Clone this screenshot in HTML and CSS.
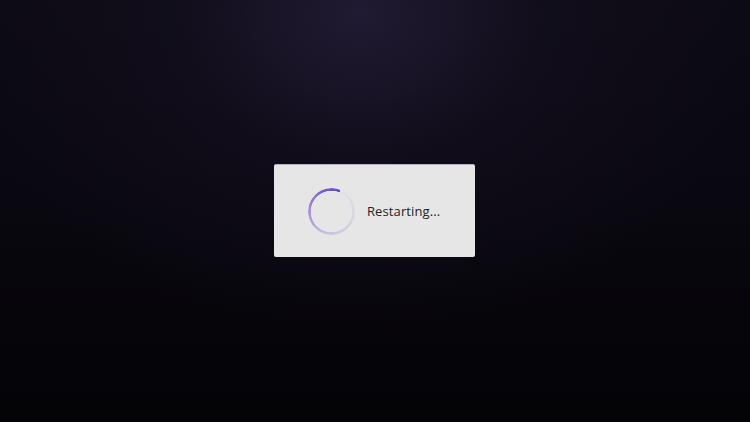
FILE: index.html
```html
<!DOCTYPE html>
<html>
<head>
<meta charset="utf-8">
<link rel="stylesheet" href="styles.css">
</head>
<body>
<div class="screen">
  <div class="dialog">
    <div class="spinner"></div>
    <span class="label">Restarting...</span>
  </div>
</div>
</body>
</html>
```
FILE: styles.css
```css
html, body {
  margin: 0;
  padding: 0;
  width: 750px;
  height: 422px;
  overflow: hidden;
}
.screen {
  width: 750px;
  height: 422px;
  background:
    radial-gradient(ellipse 400px 320px at 360px 15px, rgba(34,27,52,0.95) 0%, rgba(22,17,34,0.55) 45%, rgba(10,8,16,0) 100%),
    linear-gradient(to bottom, #0c0a13 0%, #09070f 50%, #040306 100%);
  display: flex;
  align-items: center;
  justify-content: center;
}
.dialog {
  width: 201px;
  height: 93px;
  box-sizing: border-box;
  margin-top: -1px;
  margin-left: -1px;
  background: #e6e6e7;
  border-radius: 2px;
  border-top: 1px solid #b7b1c6;
  display: flex;
  align-items: center;
  padding-left: 34px;
  gap: 12px;
}
.spinner {
  width: 47px;
  height: 47px;
  border-radius: 50%;
  background: conic-gradient(from 22deg,
    rgba(220,218,226,0.4) 0%,
    #d9d6df 22%,
    #c9bfe2 48%,
    #a08bd6 72%,
    #7a5ecb 88%,
    #6548bf 100%);
  -webkit-mask: radial-gradient(circle, transparent 20.5px, #000 21px, #000 23.5px, transparent 24px);
  mask: radial-gradient(circle, transparent 20.5px, #000 21px, #000 23.5px, transparent 24px);
  flex: none;
}
.label {
  font-family: "Open Sans", "Liberation Sans", sans-serif;
  font-size: 13px;
  color: #232326;
  letter-spacing: 0.1px;
  margin-top: -1px;
}
```
